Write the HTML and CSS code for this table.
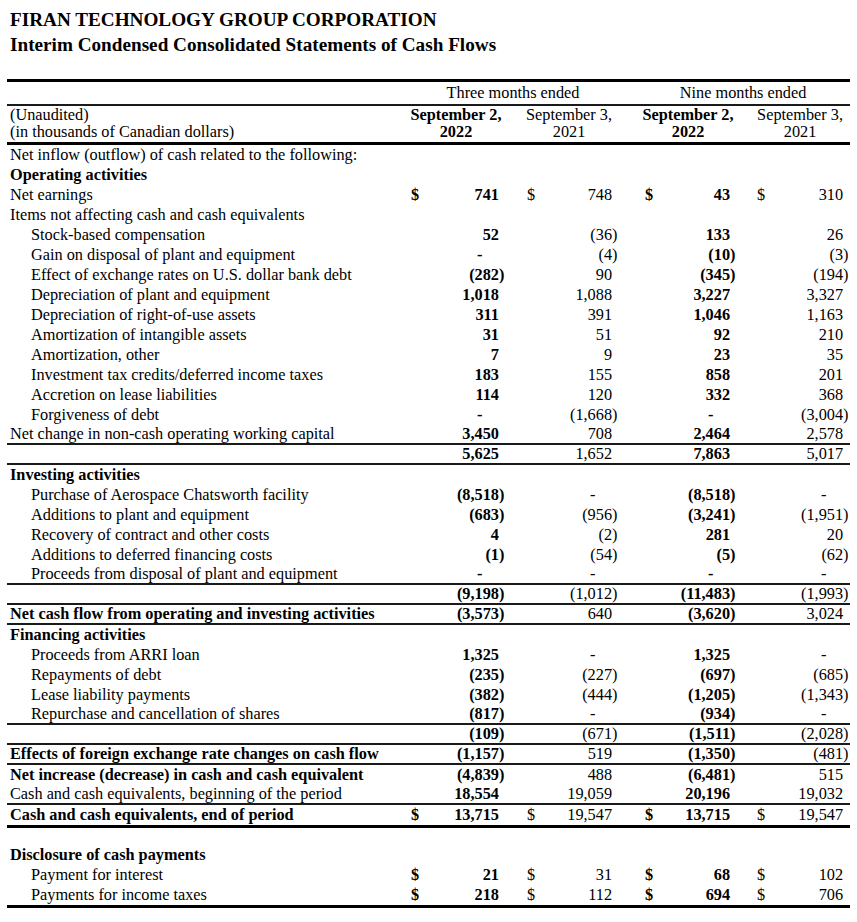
FILE: index.html
```html
<!DOCTYPE html>
<html lang="en">
<head>
<meta charset="utf-8">
<title>FIRAN Technology Group Corporation - Cash Flows</title>
<link rel="stylesheet" href="styles.css">
</head>
<body>
<div class="page">
  <header class="title">
    <div>FIRAN TECHNOLOGY GROUP CORPORATION</div>
    <div>Interim Condensed Consolidated Statements of Cash Flows</div>
  </header>
  <table class="cf">
    <colgroup>
      <col class="c-label"><col class="c-s1"><col class="c-n1"><col class="c-s2"><col class="c-n2"><col class="c-s3"><col class="c-n3"><col class="c-s4"><col class="c-n4">
    </colgroup>
    <thead>
      <tr class="period">
        <td></td>
        <td colspan="4">Three months ended</td>
        <td colspan="4" class="nine">Nine months ended</td>
      </tr>
      <tr class="dates">
        <td class="lbl">(Unaudited)<br>(in thousands of Canadian dollars)</td>
        <td colspan="2" class="cur">September 2,<br>2022</td>
        <td colspan="2">September 3,<br>2021</td>
        <td colspan="2" class="cur">September 2,<br>2022</td>
        <td colspan="2">September 3,<br>2021</td>
      </tr>
    </thead>
    <tbody>
      <tr><td>Net inflow (outflow) of cash related to the following:</td><td></td><td></td><td></td><td></td><td></td><td></td><td></td><td></td></tr>
      <tr class="b"><td>Operating activities</td><td></td><td></td><td></td><td></td><td></td><td></td><td></td><td></td></tr>
      <tr><td>Net earnings</td><td>$</td><td>741</td><td>$</td><td>748</td><td>$</td><td>43</td><td>$</td><td>310</td></tr>
      <tr><td>Items not affecting cash and cash equivalents</td><td></td><td></td><td></td><td></td><td></td><td></td><td></td><td></td></tr>
      <tr class="i"><td>Stock-based compensation</td><td></td><td>52</td><td></td><td><span class="ng">(36)</span></td><td></td><td>133</td><td></td><td>26</td></tr>
      <tr class="i"><td>Gain on disposal of plant and equipment</td><td></td><td><span class="dash">-</span></td><td></td><td><span class="ng">(4)</span></td><td></td><td><span class="ng">(10)</span></td><td></td><td><span class="ng">(3)</span></td></tr>
      <tr class="i"><td>Effect of exchange rates on U.S. dollar bank debt</td><td></td><td><span class="ng">(282)</span></td><td></td><td>90</td><td></td><td><span class="ng">(345)</span></td><td></td><td><span class="ng">(194)</span></td></tr>
      <tr class="i"><td>Depreciation of plant and equipment</td><td></td><td>1,018</td><td></td><td>1,088</td><td></td><td>3,227</td><td></td><td>3,327</td></tr>
      <tr class="i"><td>Depreciation of right-of-use assets</td><td></td><td>311</td><td></td><td>391</td><td></td><td>1,046</td><td></td><td>1,163</td></tr>
      <tr class="i"><td>Amortization of intangible assets</td><td></td><td>31</td><td></td><td>51</td><td></td><td>92</td><td></td><td>210</td></tr>
      <tr class="i"><td>Amortization, other</td><td></td><td>7</td><td></td><td>9</td><td></td><td>23</td><td></td><td>35</td></tr>
      <tr class="i"><td>Investment tax credits/deferred income taxes</td><td></td><td>183</td><td></td><td>155</td><td></td><td>858</td><td></td><td>201</td></tr>
      <tr class="i"><td>Accretion on lease liabilities</td><td></td><td>114</td><td></td><td>120</td><td></td><td>332</td><td></td><td>368</td></tr>
      <tr class="i"><td>Forgiveness of debt</td><td></td><td><span class="dash">-</span></td><td></td><td><span class="ng">(1,668)</span></td><td></td><td><span class="dash">-</span></td><td></td><td><span class="ng">(3,004)</span></td></tr>
      <tr class="rule"><td>Net change in non-cash operating working capital</td><td></td><td>3,450</td><td></td><td>708</td><td></td><td>2,464</td><td></td><td>2,578</td></tr>
      <tr class="rule"><td></td><td></td><td>5,625</td><td></td><td>1,652</td><td></td><td>7,863</td><td></td><td>5,017</td></tr>
      <tr class="b"><td>Investing activities</td><td></td><td></td><td></td><td></td><td></td><td></td><td></td><td></td></tr>
      <tr class="i"><td>Purchase of Aerospace Chatsworth facility</td><td></td><td><span class="ng">(8,518)</span></td><td></td><td><span class="dash">-</span></td><td></td><td><span class="ng">(8,518)</span></td><td></td><td><span class="dash">-</span></td></tr>
      <tr class="i"><td>Additions to plant and equipment</td><td></td><td><span class="ng">(683)</span></td><td></td><td><span class="ng">(956)</span></td><td></td><td><span class="ng">(3,241)</span></td><td></td><td><span class="ng">(1,951)</span></td></tr>
      <tr class="i"><td>Recovery of contract and other costs</td><td></td><td>4</td><td></td><td><span class="ng">(2)</span></td><td></td><td>281</td><td></td><td>20</td></tr>
      <tr class="i"><td>Additions to deferred financing costs</td><td></td><td><span class="ng">(1)</span></td><td></td><td><span class="ng">(54)</span></td><td></td><td><span class="ng">(5)</span></td><td></td><td><span class="ng">(62)</span></td></tr>
      <tr class="i rule"><td>Proceeds from disposal of plant and equipment</td><td></td><td><span class="dash">-</span></td><td></td><td><span class="dash">-</span></td><td></td><td><span class="dash">-</span></td><td></td><td><span class="dash">-</span></td></tr>
      <tr class="rule"><td></td><td></td><td><span class="ng">(9,198)</span></td><td></td><td><span class="ng">(1,012)</span></td><td></td><td><span class="ng">(11,483)</span></td><td></td><td><span class="ng">(1,993)</span></td></tr>
      <tr class="b rule"><td>Net cash flow from operating and investing activities</td><td></td><td><span class="ng">(3,573)</span></td><td></td><td>640</td><td></td><td><span class="ng">(3,620)</span></td><td></td><td>3,024</td></tr>
      <tr class="b"><td>Financing activities</td><td></td><td></td><td></td><td></td><td></td><td></td><td></td><td></td></tr>
      <tr class="i"><td>Proceeds from ARRI loan</td><td></td><td>1,325</td><td></td><td><span class="dash">-</span></td><td></td><td>1,325</td><td></td><td><span class="dash">-</span></td></tr>
      <tr class="i"><td>Repayments of debt</td><td></td><td><span class="ng">(235)</span></td><td></td><td><span class="ng">(227)</span></td><td></td><td><span class="ng">(697)</span></td><td></td><td><span class="ng">(685)</span></td></tr>
      <tr class="i"><td>Lease liability payments</td><td></td><td><span class="ng">(382)</span></td><td></td><td><span class="ng">(444)</span></td><td></td><td><span class="ng">(1,205)</span></td><td></td><td><span class="ng">(1,343)</span></td></tr>
      <tr class="i rule"><td>Repurchase and cancellation of shares</td><td></td><td><span class="ng">(817)</span></td><td></td><td><span class="dash">-</span></td><td></td><td><span class="ng">(934)</span></td><td></td><td><span class="dash">-</span></td></tr>
      <tr class="rule"><td></td><td></td><td><span class="ng">(109)</span></td><td></td><td><span class="ng">(671)</span></td><td></td><td><span class="ng">(1,511)</span></td><td></td><td><span class="ng">(2,028)</span></td></tr>
      <tr class="b rule"><td>Effects of foreign exchange rate changes on cash flow</td><td></td><td><span class="ng">(1,157)</span></td><td></td><td>519</td><td></td><td><span class="ng">(1,350)</span></td><td></td><td><span class="ng">(481)</span></td></tr>
      <tr class="b"><td>Net increase (decrease) in cash and cash equivalent</td><td></td><td><span class="ng">(4,839)</span></td><td></td><td>488</td><td></td><td><span class="ng">(6,481)</span></td><td></td><td>515</td></tr>
      <tr class="rule"><td>Cash and cash equivalents, beginning of the period</td><td></td><td>18,554</td><td></td><td>19,059</td><td></td><td>20,196</td><td></td><td>19,032</td></tr>
      <tr class="b heavy"><td>Cash and cash equivalents, end of period</td><td>$</td><td>13,715</td><td>$</td><td>19,547</td><td>$</td><td>13,715</td><td>$</td><td>19,547</td></tr>
      <tr class="gap"><td colspan="9"></td></tr>
      <tr class="b"><td>Disclosure of cash payments</td><td></td><td></td><td></td><td></td><td></td><td></td><td></td><td></td></tr>
      <tr class="i"><td>Payment for interest</td><td>$</td><td>21</td><td>$</td><td>31</td><td>$</td><td>68</td><td>$</td><td>102</td></tr>
      <tr class="i heavy"><td>Payments for income taxes</td><td>$</td><td>218</td><td>$</td><td>112</td><td>$</td><td>694</td><td>$</td><td>706</td></tr>
    </tbody>
  </table>
</div>
</body>
</html>
```

FILE: styles.css
```css
html, body {
  margin: 0;
  padding: 0;
  background: #ffffff;
}

body {
  font-family: "Liberation Serif", "Times New Roman", serif;
  color: #000000;
}

.page {
  padding-top: 7px;
}

.title {
  padding-left: 10px;
  font-size: 19.2px;
  line-height: 25px;
  font-weight: bold;
}

.cf {
  margin: 22px 0 0 7px;
  width: 843px;
  table-layout: fixed;
  border-collapse: separate;
  border-spacing: 0;
  border-top: 3px solid #000;
  font-size: 16.3px;
}

.c-label { width: 393px; }
.c-s1 { width: 30px; }
.c-n1 { width: 82px; }
.c-s2 { width: 28px; }
.c-n2 { width: 86px; }
.c-s3 { width: 34px; }
.c-n3 { width: 90px; }
.c-s4 { width: 20px; }
.c-n4 { width: 80px; }

.cf td {
  padding: 0;
  white-space: nowrap;
  vertical-align: middle;
}

/* header */
.period td {
  line-height: 22px;
  text-align: center;
  border-bottom: 2px solid #1a1a1a;
}
.period .nine {
  padding-left: 10px;
}

.dates td {
  line-height: 17px;
  text-align: center;
  padding-bottom: 2px;
  border-bottom: 3px solid #000;
}
.dates td.lbl {
  text-align: left;
  padding-left: 3px;
}
.dates td.cur {
  font-weight: bold;
}

/* body rows */
.cf tbody td {
  line-height: 20px;
  text-align: right;
}

.cf tbody td:nth-child(1) {
  text-align: left;
  padding-left: 3px;
}
.cf tbody tr.i td:nth-child(1) {
  padding-left: 24px;
}
.cf tbody tr.b td:nth-child(1) {
  font-weight: bold;
}

/* dollar sign cells */
.cf tbody td:nth-child(2),
.cf tbody td:nth-child(4),
.cf tbody td:nth-child(6),
.cf tbody td:nth-child(8) {
  text-align: left;
}
.cf tbody td:nth-child(2) { padding-left: 11px; }
.cf tbody td:nth-child(4) { padding-left: 15px; }
.cf tbody td:nth-child(6) { padding-left: 19px; }
.cf tbody td:nth-child(8) { padding-left: 7px; }

/* number cells */
.cf tbody td:nth-child(3) { padding-right: 13px; }
.cf tbody td:nth-child(5) { padding-right: 14px; }
.cf tbody td:nth-child(7) { padding-right: 20px; }
.cf tbody td:nth-child(9) { padding-right: 7px; }

/* current-year columns are bold */
.cf tbody td:nth-child(2),
.cf tbody td:nth-child(3),
.cf tbody td:nth-child(6),
.cf tbody td:nth-child(7) {
  font-weight: bold;
}

.ng {
  display: inline-block;
  margin-right: -0.333em;
}

.dash {
  display: inline-block;
  margin-right: 1.02em;
}

.cf tbody tr.rule td {
  line-height: 18px;
  border-bottom: 2px solid #1a1a1a;
}

.cf tbody tr.heavy td {
  border-bottom: 3px solid #000;
}

.cf tbody tr.gap td {
  line-height: 17px;
  height: 17px;
}
```
